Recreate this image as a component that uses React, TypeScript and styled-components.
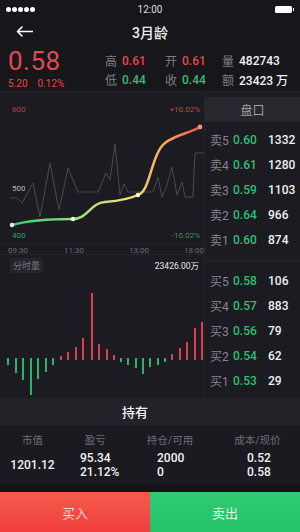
import React from 'react'
import styled, { createGlobalStyle } from 'styled-components'

const GlobalStyle = createGlobalStyle`
  html, body { margin: 0; padding: 0; background: #16161b; }
  * { box-sizing: border-box; }
`

const RED = '#e4474f'
const GREEN = '#2fbf71'

const Screen = styled.div`
  width: 300px;
  height: 532px;
  overflow: hidden;
  display: flex;
  flex-direction: column;
  background: #16161b;
  color: #fff;
  font-family: Roboto, "Noto Sans CJK SC", sans-serif;
`

const StatusBar = styled.div`
  height: 18px;
  padding: 0 6px;
  display: grid;
  grid-template-columns: 1fr auto 1fr;
  align-items: center;
`
const Dots = styled.div`
  display: flex;
  gap: 1px;
`
const Dot = styled.span`
  width: 5px;
  height: 5px;
  border-radius: 50%;
  background: #fff;
`
const Clock = styled.div`
  font-size: 10px;
  color: #ddd;
`
const Battery = styled.div`
  justify-self: end;
  width: 17px;
  height: 7px;
  border-radius: 1.5px;
  background: #fff;
  position: relative;
  margin-right: 2px;
  &::after {
    content: '';
    position: absolute;
    right: -2px;
    top: 2px;
    width: 1.5px;
    height: 3px;
    background: #fff;
  }
`

const NavBar = styled.div`
  height: 27px;
  display: grid;
  grid-template-columns: 1fr auto 1fr;
  align-items: center;
  padding: 0 16px;
`
const Title = styled.div`
  font-size: 14px;
  font-weight: 500;
  color: #eee;
`

const Quote = styled.div`
  height: 48px;
  display: flex;
  padding-left: 8px;
  border-bottom: 2px solid #1f1f25;
`
const PriceBlock = styled.div`
  width: 97px;
  display: flex;
  flex-direction: column;
  padding-top: 3px;
`
const BigPrice = styled.div`
  font-size: 26px;
  line-height: 26px;
  color: ${RED};
  letter-spacing: 0.5px;
`
const SubPrice = styled.div`
  display: flex;
  gap: 10px;
  margin-top: 4px;
  font-size: 10px;
  color: ${RED};
`
const Stats = styled.div`
  flex: 1;
  display: grid;
  grid-template-columns: 60px 57px 1fr;
  grid-auto-rows: 19px;
  align-items: center;
  padding-top: 6px;
`
const Stat = styled.div`
  display: flex;
  align-items: center;
  gap: 5px;
  font-size: 12px;
`
const StatLabel = styled.span`
  color: #7d7d86;
`
const StatValue = styled.span<{ $tone: string }>`
  color: ${p => p.$tone};
  font-weight: 500;
`

const Market = styled.div`
  height: 305px;
  display: flex;
  background: #1b1b21;
`
const LeftCol = styled.div`
  width: 205px;
  display: flex;
  flex-direction: column;
  border-right: 1px solid #25252c;
`
const ChartBox = styled.div`
  height: 162px;
  border-bottom: 1px solid #25252c;
`
const VolumeBox = styled.div`
  flex: 1;
  display: flex;
  flex-direction: column;
`
const VolumeHead = styled.div`
  height: 18px;
  display: flex;
  align-items: center;
  justify-content: space-between;
  padding: 2px 5px 0 10px;
`
const VolTag = styled.span`
  background: #25252c;
  color: #74747c;
  font-size: 9px;
  padding: 1px 3px;
`
const VolTotal = styled.span`
  font-size: 8.5px;
  color: #e8e8e8;
`

const Book = styled.div`
  flex: 1;
  display: flex;
  flex-direction: column;
  padding-top: 4px;
`
const BookHead = styled.div`
  height: 25px;
  background: #27272e;
  color: #a0a0a8;
  font-size: 12px;
  display: flex;
  align-items: center;
  justify-content: center;
`
const BookList = styled.div<{ $top: number }>`
  padding-top: ${p => p.$top}px;
`
const BookRow = styled.div`
  height: 25px;
  display: flex;
  align-items: center;
  padding-left: 5px;
  font-size: 12px;
`
const RowLabel = styled.span`
  width: 23px;
  color: #85858d;
`
const RowPrice = styled.span`
  width: 35px;
  color: ${GREEN};
  font-weight: 500;
`
const RowVol = styled.span`
  color: #f0f0f0;
  font-weight: 500;
`
const BookDivider = styled.div`
  height: 16px;
  display: flex;
  align-items: center;
  &::before {
    content: '';
    flex: 1;
    height: 1px;
    background: #25252c;
  }
`

const HoldHead = styled.div`
  height: 27px;
  background: #222229;
  display: flex;
  align-items: center;
  padding-left: 122px;
  font-size: 13px;
  font-weight: 500;
  color: #f0f0f0;
`
const HoldTable = styled.div`
  height: 60px;
  background: #1a1a20;
  display: grid;
  grid-template-columns: 65px 60px 90px 1fr;
  grid-template-rows: 26px 1fr;
`
const HoldLabel = styled.div`
  display: flex;
  align-items: center;
  justify-content: center;
  font-size: 10.5px;
  color: #6f6f78;
  padding-top: 2px;
`
const HoldCell = styled.div<{ $indent?: number }>`
  display: flex;
  flex-direction: column;
  justify-content: center;
  align-items: ${p => (p.$indent ? 'flex-start' : 'center')};
  padding-left: ${p => p.$indent || 0}px;
  padding-bottom: 8px;
  font-size: 12px;
  line-height: 14px;
  font-weight: 500;
  color: #f2f2f2;
`
const Band = styled.div`
  height: 7px;
  background: #141418;
`
const Actions = styled.div`
  height: 40px;
  display: flex;
`
const ActionButton = styled.button<{ $kind: 'buy' | 'sell' }>`
  flex: 1;
  border: 0;
  margin: 0;
  font-family: inherit;
  font-size: 13px;
  background: ${p => (p.$kind === 'buy' ? 'linear-gradient(180deg,#f45a4c,#f2403d)' : 'linear-gradient(180deg,#2fcb72,#25c268)')};
  color: ${p => (p.$kind === 'buy' ? '#ffd3cc' : '#d8ffe7')};
`

const stats = [
  ['高', '0.61', RED],
  ['开', '0.61', RED],
  ['量', '482743', '#f2f2f2'],
  ['低', '0.44', GREEN],
  ['收', '0.44', GREEN],
  ['额', '23423 万', '#f2f2f2'],
]

const sells = [
  ['卖5', '0.60', '1332'],
  ['卖4', '0.61', '1280'],
  ['卖3', '0.59', '1103'],
  ['卖2', '0.64', '966'],
  ['卖1', '0.60', '874'],
]
const buys = [
  ['买5', '0.58', '106'],
  ['买4', '0.57', '883'],
  ['买3', '0.56', '79'],
  ['买2', '0.54', '62'],
  ['买1', '0.53', '29'],
]

const greyLine = [
  [10, 105], [17, 105], [22, 110], [33, 90], [40, 124], [50, 70], [59, 117], [68, 75], [78, 99], [98, 99],
  [106, 80], [110, 87], [115, 51], [120, 102], [124, 91], [128, 99], [153, 99], [158, 84], [162, 104],
  [167, 92], [172, 74], [177, 102], [182, 89], [185, 104], [193, 104], [195, 60], [205, 60],
]

// bars: [x, page-y of tip], baseline at page y 360
const upBars = [[61, 356], [68, 352], [76, 347], [83, 338], [92, 293], [99, 344], [107, 349], [114, 355], [172, 354], [180, 348], [187, 342], [195, 328], [202, 322]]
const downBars = [[8, 365], [16, 373], [23, 380], [31, 395], [38, 379], [46, 372], [53, 365], [121, 362], [128, 365], [136, 368], [143, 374], [150, 367], [158, 365], [165, 362]]

const PriceChart = () => (
  <svg width="204" height="161" viewBox="0 0 204 161">
    <defs>
      <linearGradient id="curve" x1="0" y1="0" x2="1" y2="0">
        <stop offset="0%" stopColor="#2ecf74" />
        <stop offset="40%" stopColor="#a8e07c" />
        <stop offset="62%" stopColor="#f1e37c" />
        <stop offset="82%" stopColor="#f4a45e" />
        <stop offset="100%" stopColor="#ef5a52" />
      </linearGradient>
    </defs>
    <line x1="0" y1="150" x2="204" y2="150" stroke="#26262d" strokeWidth="1" />
    <polyline points={greyLine.map(p => p.join(',')).join(' ')} fill="none" stroke="#4a4a52" strokeWidth="1" />
    <path d="M12,132 C30,127 50,126 73,126 C88,126 90,110 105,109 C118,108 130,106 140,101 C150,96 152,60 165,50 C175,42 190,40 200,34"
      fill="none" stroke="url(#curve)" strokeWidth="2.5" strokeLinecap="round" />
    <circle cx="12" cy="132" r="2.2" fill="#e8fff0" />
    <circle cx="73" cy="126" r="2.2" fill="#f4fff0" />
    <circle cx="138" cy="102" r="2.2" fill="#fffbe8" />
    <circle cx="200" cy="34" r="2.4" fill="#ff8a80" />
    <g fontFamily="Roboto, sans-serif" fontSize="8">
      <text x="12" y="19" fill="#b5434a">600</text>
      <text x="200" y="19" fill="#c9484f" textAnchor="end">+10.02%</text>
      <text x="12" y="98" fill="#b8b8be">500</text>
      <text x="12" y="145" fill="#2c9d62">400</text>
      <text x="200" y="145" fill="#2c9d62" textAnchor="end">-10.02%</text>
      <text x="8" y="160" fill="#6a6a72">09:30</text>
      <text x="74" y="160" fill="#6a6a72" textAnchor="middle">11:30</text>
      <text x="139" y="160" fill="#6a6a72" textAnchor="middle">13:00</text>
      <text x="194" y="160" fill="#6a6a72" textAnchor="middle">18:00</text>
    </g>
  </svg>
)

const VolumeChart = () => {
  const top = 273
  const base = 360 - top
  return (
    <svg width="204" height="125" viewBox="0 0 204 125">
      {upBars.map(([x, y]) => (
        <rect key={'u' + x} x={x - 1} y={y - top} width="2" height={base - (y - top)} fill="#d9414d" />
      ))}
      {downBars.map(([x, y]) => (
        <rect key={'d' + x} x={x - 1} y={base - 2} width="2" height={y - top - base + 2} fill="#27b56b" />
      ))}
    </svg>
  )
}

const App = () => {
  return (
    <Screen>
      <GlobalStyle />
      <StatusBar>
        <Dots>{[0, 1, 2, 3, 4].map(i => <Dot key={i} />)}</Dots>
        <Clock>12:00</Clock>
        <Battery />
      </StatusBar>

      <NavBar>
        <svg width="17" height="11" viewBox="0 0 17 11">
          <path d="M16.5,5.5 H1.5 M6,1 L1.5,5.5 L6,10" fill="none" stroke="#fff" strokeWidth="1.6" strokeLinecap="round" strokeLinejoin="round" />
        </svg>
        <Title>3月龄</Title>
        <span />
      </NavBar>

      <Quote>
        <PriceBlock>
          <BigPrice>0.58</BigPrice>
          <SubPrice>
            <span>5.20</span>
            <span>0.12%</span>
          </SubPrice>
        </PriceBlock>
        <Stats>
          {stats.map(([label, value, tone]) => (
            <Stat key={label}>
              <StatLabel>{label}</StatLabel>
              <StatValue $tone={tone}>{value}</StatValue>
            </Stat>
          ))}
        </Stats>
      </Quote>

      <Market>
        <LeftCol>
          <ChartBox>
            <PriceChart />
          </ChartBox>
          <VolumeBox>
            <VolumeHead>
              <VolTag>分时量</VolTag>
              <VolTotal>23426.00万</VolTotal>
            </VolumeHead>
            <VolumeChart />
          </VolumeBox>
        </LeftCol>
        <Book>
          <BookHead>盘口</BookHead>
          <BookList $top={5}>
            {sells.map(([l, p, v]) => (
              <BookRow key={l}>
                <RowLabel>{l}</RowLabel>
                <RowPrice>{p}</RowPrice>
                <RowVol>{v}</RowVol>
              </BookRow>
            ))}
          </BookList>
          <BookDivider />
          <BookList $top={0}>
            {buys.map(([l, p, v]) => (
              <BookRow key={l}>
                <RowLabel>{l}</RowLabel>
                <RowPrice>{p}</RowPrice>
                <RowVol>{v}</RowVol>
              </BookRow>
            ))}
          </BookList>
        </Book>
      </Market>

      <HoldHead>持有</HoldHead>
      <HoldTable>
        <HoldLabel>市值</HoldLabel>
        <HoldLabel>盈亏</HoldLabel>
        <HoldLabel>持仓/可用</HoldLabel>
        <HoldLabel>成本/现价</HoldLabel>
        <HoldCell>1201.12</HoldCell>
        <HoldCell $indent={15}>
          <span>95.34</span>
          <span>21.12%</span>
        </HoldCell>
        <HoldCell $indent={32}>
          <span>2000</span>
          <span>0</span>
        </HoldCell>
        <HoldCell $indent={32}>
          <span>0.52</span>
          <span>0.58</span>
        </HoldCell>
      </HoldTable>
      <Band />
      <Actions>
        <ActionButton $kind="buy">买入</ActionButton>
        <ActionButton $kind="sell">卖出</ActionButton>
      </Actions>
    </Screen>
  )
}

export default App
